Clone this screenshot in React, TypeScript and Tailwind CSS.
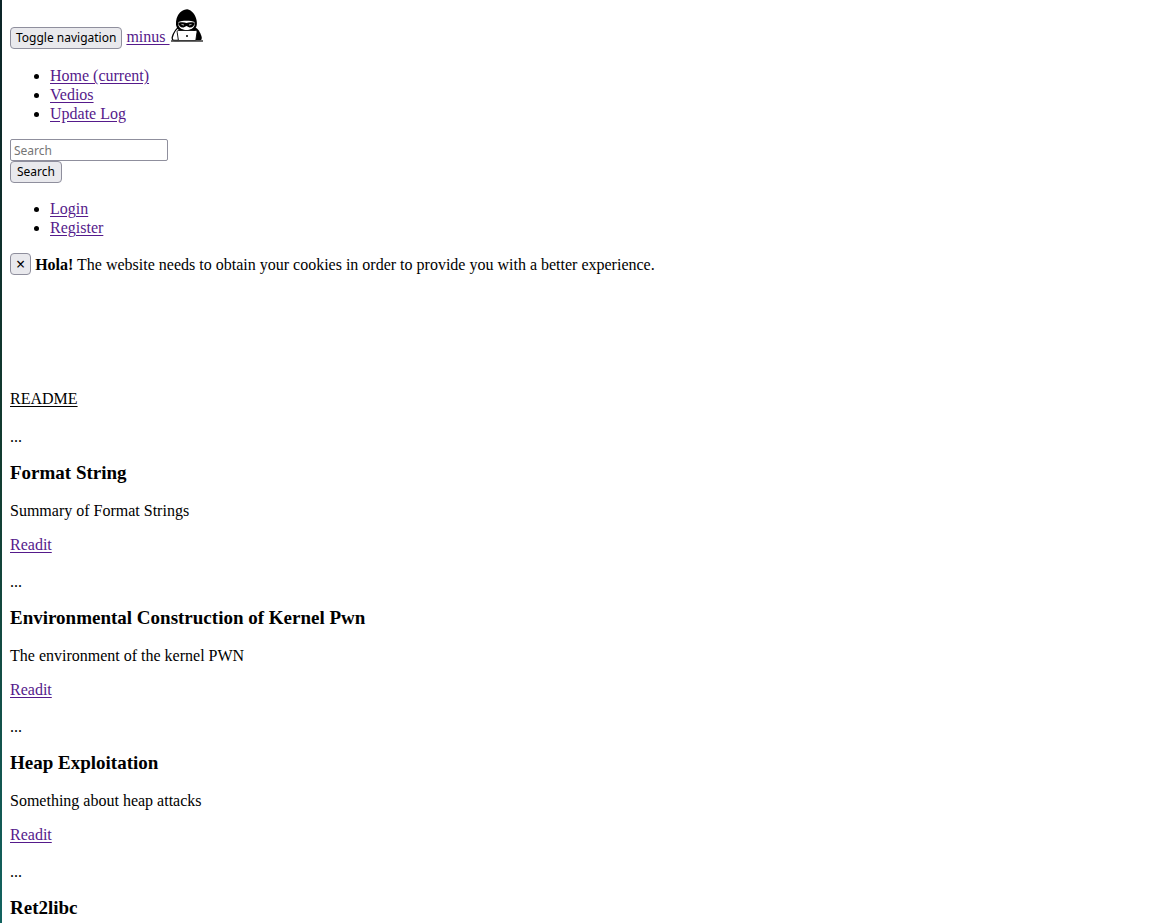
import React from "react"

interface Article {
	title: string
	summary?: string
}

interface NavListProps {
	items: string[]
}

const articles: Article[] = [
	{ title: "Format String", summary: "Summary of Format Strings" },
	{ title: "Environmental Construction of Kernel Pwn", summary: "The environment of the kernel PWN" },
	{ title: "Heap Exploitation", summary: "Something about heap attacks" },
	{ title: "Ret2libc" },
]

const link = "text-[#551a8b] underline underline-offset-2"
const button = "h-[22px] rounded-[4px] border border-[#8f8f9d] bg-[#e9e9ed] font-['Noto_Sans',sans-serif]"

const HackerIcon: React.FC = () => (
	<svg className="inline-block h-[33px] w-[33px] align-baseline" viewBox="0 0 33 33" aria-hidden="true">
		{/* arms */}
		<path d="M9 18.5C5 20 3.5 24 2.2 28.5C2.1 31 3 31.5 5 31.5H9V22Z" fill="#fff" stroke="#000" strokeWidth="1.3" />
		<path d="M23 17.5C28 19 30 22.5 31.7 28C32 31 31 31.5 28 31.5H22Z" fill="#000" />
		{/* hood */}
		<path d="M6 16C5.7 11 7 6.5 10 3.5C12.5 1 15.5 .2 17.2 .2C22 1.2 25.5 5.5 26.5 11C27.1 14 27 16 26.2 18L24 21H9.5L7 19Z" fill="#000" />
		{/* face and mask */}
		<path d="M8.5 13C12 11.2 21 11.2 24.5 13V16.5C23.5 19.5 20 21 16.5 21C13 21 9.5 19.5 8.5 16.5Z" fill="#fff" />
		<path d="M8.5 13.7C12 12.8 14.5 13.2 16.5 14C18.5 13.2 21 12.8 24.5 13.7C24.5 17 22.5 18.6 19.5 18.4L16.5 17L13.5 18.4C10.5 18.6 8.5 17 8.5 13.7Z" fill="#000" />
		<path d="M11.5 15.4L14 16M19 16L21.5 15.4" stroke="#fff" strokeWidth=".7" />
		{/* laptop */}
		<path d="M8.5 21.5H25.5C26.8 21.5 27.2 22.1 27 23.2L25.8 31.5H8.4L7.2 23.2C7 22.1 7.3 21.5 8.5 21.5Z" fill="#fff" stroke="#000" strokeWidth=".9" />
		<circle cx="17" cy="27" r="1" fill="#000" />
		<path d="M1 32H33" stroke="#444" strokeWidth="1.6" />
	</svg>
)

const NavList: React.FC<NavListProps> = ({ items }) => (
	<ul className="my-4 list-disc pl-10">
		{items.map((item) => (
			<li key={item}><a className={link} href="#">{item}</a></li>
		))}
	</ul>
)

const ArticleItem: React.FC<Article> = ({ title, summary }) => (
	<article>
		<p className="leading-[18px]">...</p>
		<h3 className="mt-4 mb-[19px] text-[19px] leading-[21px] font-bold">{title}</h3>
		{summary && (
			<>
				<p className="mb-4 leading-[18px]">{summary}</p>
				<p className="mb-[19px] leading-[18px]"><a className={link} href="#">Readit</a></p>
			</>
		)}
	</article>
)

export default function App() {
	return (
		<div className="flex min-h-screen bg-white font-['Liberation_Serif',serif] text-base leading-[19px] text-black">
			<div className="w-[2px] shrink-0 bg-linear-to-b from-[#0b2427] via-[#123c30] to-[#126461]" />
			<div className="min-w-0 grow px-2 pt-[9px]">
				<nav>
					<div className="pb-px leading-[21px]">
						<button type="button" className={`${button} px-[5px] text-xs`}>Toggle navigation</button>{" "}
						<a className={link} href="#">minus <HackerIcon /></a>
					</div>
					<NavList items={["Home (current)", "Vedios", "Update Log"]} />
					<form className="flex flex-col items-start" onSubmit={(e) => e.preventDefault()}>
						<input
							type="text"
							aria-label="Search"
							placeholder="Search"
							className="h-[22px] w-[158px] rounded-[2px] border border-[#8f8f9d] px-[3px] font-['Noto_Sans',sans-serif] text-xs placeholder:text-[#757575]"
						/>
						<button type="submit" className={`${button} px-1.5 text-xs`}>Search</button>
					</form>
					<NavList items={["Login", "Register"]} />
				</nav>
				<div role="alert">
					<button type="button" aria-label="Close" className={`${button} px-[5px] text-base leading-5`}>×</button>{" "}
					<strong>Hola!</strong> The website needs to obtain your cookies in order to provide you with a better experience.
				</div>
				<main className="pt-[114px]">
					<p className="mb-[19px] leading-5"><a className="underline underline-offset-2" href="#">README</a></p>
					{articles.map((article) => (
						<ArticleItem key={article.title} {...article} />
					))}
				</main>
			</div>
		</div>
	)
}
